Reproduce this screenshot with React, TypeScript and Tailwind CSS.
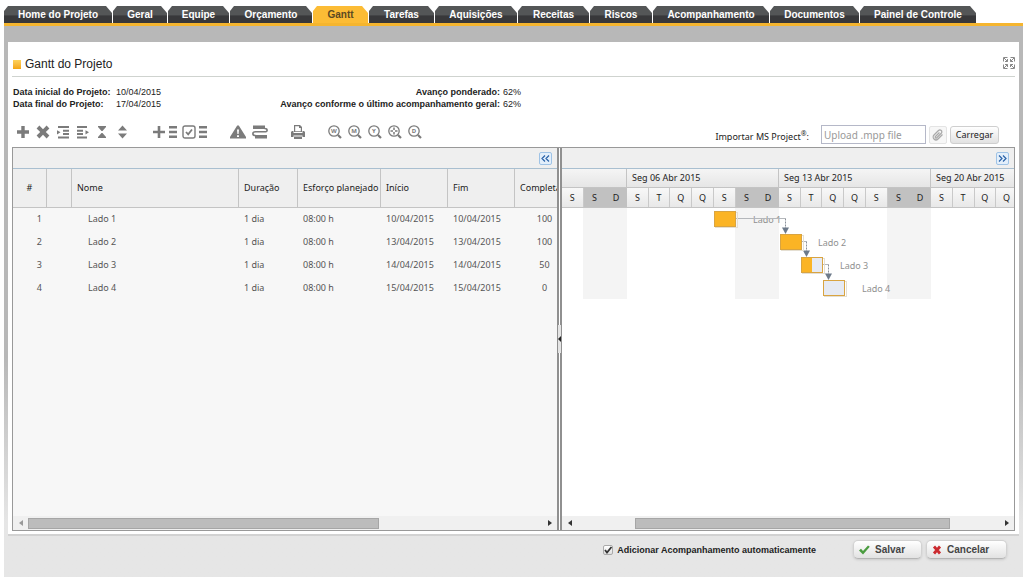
import { useState } from "react";
import type { ReactNode } from "react";

const TABS = [
  { label: "Home do Projeto", width: "w-[108px]" },
  { label: "Geral", width: "w-[54px]" },
  { label: "Equipe", width: "w-[61px]" },
  { label: "Orçamento", width: "w-[82px]" },
  { label: "Gantt", width: "w-[55px]" },
  { label: "Tarefas", width: "w-[65px]" },
  { label: "Aquisições", width: "w-[82px]" },
  { label: "Receitas", width: "w-[71px]" },
  { label: "Riscos", width: "w-[62px]" },
  { label: "Acompanhamento", width: "w-[116px]" },
  { label: "Documentos", width: "w-[89px]" },
  { label: "Painel de Controle", width: "w-[116px]" },
];

const TASKS = [
  { id: 1, name: "Lado 1", start: "10/04/2015", end: "10/04/2015", done: 100, x: 152, labelX: 191 },
  { id: 2, name: "Lado 2", start: "13/04/2015", end: "13/04/2015", done: 100, x: 218, labelX: 256 },
  { id: 3, name: "Lado 3", start: "14/04/2015", end: "14/04/2015", done: 50, x: 239, labelX: 278 },
  { id: 4, name: "Lado 4", start: "15/04/2015", end: "15/04/2015", done: 0, x: 261, labelX: 300 },
];

// The visible range starts on a Friday and ends on a Thursday
const WEEKS = [
  { label: "", days: ["S", "S", "D"], weekend: 1, width: "w-[65px]", cols: "grid-cols-3" },
  { label: "Seg 06 Abr 2015", days: ["S", "T", "Q", "Q", "S", "S", "D"], weekend: 5, width: "w-[152px]", cols: "grid-cols-7" },
  { label: "Seg 13 Abr 2015", days: ["S", "T", "Q", "Q", "S", "S", "D"], weekend: 5, width: "w-[152px]", cols: "grid-cols-7" },
  { label: "Seg 20 Abr 2015", days: ["S", "T", "Q", "Q"], weekend: 5, width: "w-[87px]", cols: "grid-cols-4" },
];

const ROW = 23;

function Tabs({ active, onSelect }: { active: string; onSelect: (tab: string) => void }) {
  return (
    <nav className="flex gap-px border-b-[3px] border-[#f5b52f] pt-1.5 text-[10px] leading-[17px] font-bold">
      {TABS.map((tab) => (
        <button
          key={tab.label}
          type="button"
          onClick={() => onSelect(tab.label)}
          className={
            "h-[17px] shrink-0 whitespace-nowrap [clip-path:polygon(0_5px,4px_0,calc(100%-6px)_0,100%_7px,100%_100%,0_100%)] " +
            tab.width +
            (tab.label === active
              ? " bg-[#fcbc35] text-[#5c4a22]"
              : " bg-linear-to-b from-[#545657] from-50% to-[#38383a] to-60% text-white")
          }
        >
          {tab.label}
        </button>
      ))}
    </nav>
  );
}

function Tool({ label, size = "w-5", children }: { label: string; size?: string; children: ReactNode }) {
  return (
    <button type="button" aria-label={label} title={label} className={"flex h-5 items-center justify-center text-[#7b7b7b] " + size}>
      {children}
    </button>
  );
}

function Icon({ d, width = 14 }: { d: string; width?: number }) {
  return (
    <svg width={width} height="14" viewBox={`0 0 ${width} 14`} fill="currentColor" fillRule="evenodd">
      <path d={d} />
    </svg>
  );
}

function ZoomIcon({ letter }: { letter: string }) {
  return (
    <svg width="14" height="14" viewBox="0 0 14 14" fill="none" stroke="currentColor">
      <circle cx="6" cy="6" r="5.2" strokeWidth="1.3" />
      <path d="M10 10l3 3" strokeWidth="2.2" />
      {letter === "+" ? (
        <path d="M6 2.500v2.500M6 7v2.500M2.500 6H5M7 6h2.500" strokeWidth="1.5" />
      ) : (
        <text x="6" y="8.2" fontSize="6" fontWeight="bold" textAnchor="middle" fill="currentColor" stroke="none">
          {letter}
        </text>
      )}
    </svg>
  );
}

function Toolbar() {
  return (
    <div className="flex gap-[17px]">
      <div className="flex">
        <Tool label="Adicionar"><Icon d="M5.300 1h3.400v4.300H13v3.400H8.700V13H5.300V8.700H1V5.300h4.300z" /></Tool>
        <Tool label="Excluir"><Icon d="M3.400.6L7 4.200 10.600.6 13.400 3.400 9.800 7 13.400 10.600 10.600 13.400 7 9.800 3.400 13.400.6 10.600 4.200 7 .6 3.400z" /></Tool>
        <Tool label="Recuar"><Icon d="M2 1h11v2H2zM7 4.700h6v2H7zM7 8h6v2H7zM2 11.500h11v2H2zM1 5.200l3.500 2.100L1 9.400z" /></Tool>
        <Tool label="Avançar"><Icon d="M1 1h10v2H1zM1 4.700h6v2H1zM1 8h6v2H1zM1 11.500h10v2H1zM9.500 5.200L13 7.300 9.500 9.400z" /></Tool>
        <Tool label="Recolher tudo"><Icon width={10} d="M0 1h8v1L4.500 6h-1L0 2zM3.500 8h1L8 12v1H0v-1z" /></Tool>
        <Tool label="Expandir tudo"><Icon width={10} d="M4.500.5L9 5.500H0zM0 8.500h9l-4.500 5z" /></Tool>
      </div>
      <div className="flex">
        <Tool label="Adicionar vários" size="w-[30px]">
          <Icon width={26} d="M5.700 1h2.600v4.700H13v2.600H8.300V13H5.700V8.300H1V5.700h4.700zM17 1h8v2.500h-8zM17 5.700h8v2.500h-8zM17 10.500h8V13h-8z" />
        </Tool>
        <Tool label="Selecionar tarefas" size="w-[30px]">
          <svg width="26" height="14" viewBox="0 0 26 14" fill="none" stroke="currentColor" strokeWidth="1.400">
            <rect x="1" y="1" width="12" height="12" rx="2" />
            <path d="M4 7l2.200 2.300L10 4.500" strokeWidth="1.800" />
            <path d="M17 2.200h8M17 7h8M17 11.800h8" strokeWidth="2.500" />
          </svg>
        </Tool>
      </div>
      <div className="flex">
        <Tool label="Caminho crítico" size="w-[22px]"><Icon width={16} d="M7.200.5h1.600L16 12v1.500H0V12zM7 4.500l.4 4.500h1.200L9 4.500zM7 10.200v1.800h2v-1.800z" /></Tool>
        <Tool label="Linha de base" size="w-[22px]">
          <svg width="16" height="14" viewBox="0 0 16 14" fill="none" stroke="currentColor">
            <path d="M1 2.300h12M3 11.700h12" strokeWidth="3.400" />
            <path d="M12.500 3.500c3.500 0 3.500 3.300 0 3.300h-9c-3.500 0-3.500 3.700 0 3.700" strokeWidth="1.600" />
          </svg>
        </Tool>
      </div>
      <Tool label="Imprimir"><Icon d="M3 0h6l2 2v5H3zM4.200 1.200v5h5.600V3H8V1.200zM1 6h1.500v2h9V6H13l1 1v5h-2.500v-1.500h-9V12H0V7zM3 11.500h8V14H3z" /></Tool>
      <div className="flex">
        <Tool label="Semana"><ZoomIcon letter="W" /></Tool>
        <Tool label="Mês"><ZoomIcon letter="M" /></Tool>
        <Tool label="Ano"><ZoomIcon letter="Y" /></Tool>
        <Tool label="Ajustar"><ZoomIcon letter="+" /></Tool>
        <Tool label="Dia"><ZoomIcon letter="D" /></Tool>
      </div>
    </div>
  );
}

function PaneBar({ label, d }: { label: string; d: string }) {
  return (
    <div className="flex h-[21px] shrink-0 items-center justify-end border-b border-[#a9bfd0] bg-[#efefef] px-[5px]">
      <button type="button" aria-label={label} className="flex h-[13px] w-[13px] items-center justify-center rounded-xs border border-[#9fc3e6] bg-[#e3effb]">
        <svg width="9" height="7" viewBox="0 0 9 7" fill="none" stroke="#2a62a8" strokeWidth="1.200">
          <path d={d} />
        </svg>
      </button>
    </div>
  );
}

function ScrollBar({ thumb, muted = false }: { thumb: string; muted?: boolean }) {
  return (
    <div className="mt-auto flex h-3.5 shrink-0 items-center bg-[#f0f0f0]">
      <button type="button" aria-label="Rolar para a esquerda" className={"flex w-[15px] justify-center " + (muted ? "text-[#999]" : "text-[#333]")}>
        <svg width="4" height="6" viewBox="0 0 4 6" fill="currentColor"><path d="M4 0v6L0 3z" /></svg>
      </button>
      <div className="flex-1">
        <div className={"h-[11px] border border-[#a6a6a6] bg-[#bcbcbc] " + thumb} />
      </div>
      <button type="button" aria-label="Rolar para a direita" className="flex w-[15px] justify-center text-[#333]">
        <svg width="4" height="6" viewBox="0 0 4 6" fill="currentColor"><path d="M0 0v6l4-3z" /></svg>
      </button>
    </div>
  );
}

function TaskTable() {
  const th = "border-r border-b border-[#c4c4c4] pl-[5px] text-left font-normal";
  return (
    <div className="overflow-hidden">
      <table className="w-[561px] table-fixed border-separate border-spacing-0 text-[#555]">
        <colgroup>
          <col className="w-[34px]" />
          <col className="w-[25px]" />
          <col className="w-[167px]" />
          <col className="w-[59px]" />
          <col className="w-[83px]" />
          <col className="w-[67px]" />
          <col className="w-[67px]" />
          <col className="w-[59px]" />
        </colgroup>
        <thead>
          <tr className="h-[39px] bg-[#efefef] text-[#222]">
            <th className="border-r border-b border-[#c4c4c4] text-center font-normal">#</th>
            <th className={th} aria-label="Indicador" />
            <th className={th}>Nome</th>
            <th className={th}>Duração</th>
            <th className={th + " whitespace-nowrap"}>Esforço planejado</th>
            <th className={th}>Início</th>
            <th className={th}>Fim</th>
            <th className={th}>Completa</th>
          </tr>
        </thead>
        <tbody>
          {TASKS.map((task) => (
            <tr key={task.id} className="h-[23px] *:pb-0.5">
              <td className="pr-[5px] text-right">{task.id}</td>
              <td />
              <td className="pl-4">{task.name}</td>
              <td className="pl-[5px]">1 dia</td>
              <td className="pl-[5px]">08:00 h</td>
              <td className="pl-[5px]">{task.start}</td>
              <td className="pl-[5px]">{task.end}</td>
              <td className="text-center">{task.done}</td>
            </tr>
          ))}
        </tbody>
      </table>
    </div>
  );
}

function Timeline() {
  return (
    <div className="overflow-hidden">
      <div className="flex text-[#222]">
        {WEEKS.map((week, i) => (
          <div key={i} className={"shrink-0 " + week.width}>
            <div className="h-[19px] border-r border-b border-[#c4c4c4] bg-linear-to-b from-[#f5f5f5] to-[#e6e6e6] pl-[5px] leading-[18px] whitespace-nowrap">
              {week.label}
            </div>
            <div className={"grid h-5 border-b border-[#c4c4c4] text-center leading-[19px] " + week.cols}>
              {week.days.map((day, j) => (
                <span
                  key={j}
                  className={
                    j >= week.weekend
                      ? "bg-[#c1c1c1]"
                      : "border-r border-[#c9c9c9] bg-linear-to-b from-[#f8f8f8] to-[#e8e8e8]"
                  }
                >
                  {day}
                </span>
              ))}
            </div>
          </div>
        ))}
      </div>
      <svg width="452" height="92" className="block">
        {[21, 173, 325].map((x) => (
          <rect key={x} x={x} width="44" height="91" fill="#f4f4f4" />
        ))}
        {TASKS.map((task, i) => (
          <text key={task.id} x={task.labelX} y={i * ROW + 15} fill="#8f8f8f">
            {task.name}
          </text>
        ))}
        {TASKS.slice(1).map((task, i) => {
          const from = TASKS[i].x + 22;
          const y = i * ROW + 10.5;
          const x = task.x + 5.5;
          return (
            <g key={task.id}>
              <path d={`M${from} ${y}H${x}`} fill="none" stroke="#b4b7bb" />
              <path d={`M${x} ${y}V${y + 10}`} fill="none" stroke="#8b919a" strokeDasharray="2 1" />
              <path d={`M${x - 3.5} ${y + 9}h7l-3.500 6.500z`} fill="#6d7a8a" />
            </g>
          );
        })}
        {TASKS.map((task, i) => (
          <g key={task.id}>
            <rect x={task.x + 1.5} y={i * ROW + 4.5} width="22" height="15" fill="none" stroke="#e5dfd2" />
            <rect x={task.x + 0.5} y={i * ROW + 3.5} width="21" height="15" fill="#e6eaf3" />
            <rect x={task.x + 0.5} y={i * ROW + 3.5} width={(21 * task.done) / 100} height="15" fill="#fbb425" />
            <rect x={task.x + 0.5} y={i * ROW + 3.5} width="21" height="15" fill="none" stroke="#d9a441" />
          </g>
        ))}
      </svg>
    </div>
  );
}

function Splitter() {
  return (
    <div className="flex w-[5px] shrink-0 items-center border-x-2 border-[#909090] bg-white">
      <button type="button" aria-label="Recolher painel" className="-mx-px flex h-7 w-[3px] shrink-0 items-center justify-center bg-[#e4e4e4]">
        <svg width="3" height="6" viewBox="0 0 3 6" className="shrink-0"><path d="M3 0v6L0 3z" fill="#222" /></svg>
      </button>
    </div>
  );
}

const FOOTER_BUTTON =
  "flex h-[19px] items-center rounded-[5px] border border-[#d2d2d2] border-b-[#b5b5b5] bg-linear-to-b from-white to-[#e2e2e2] pl-[5px] text-[10px] font-bold text-[#444] shadow-sm";

export default function App() {
  const [tab, setTab] = useState("Gantt");
  const [auto, setAuto] = useState(true);
  const [file, setFile] = useState("");

  return (
    <div className="flex min-h-screen flex-col bg-white pr-px pl-1 font-['Liberation_Sans',Arial,sans-serif] text-[9px] leading-3 text-[#222]">
      <Tabs active={tab} onSelect={setTab} />
      <div className="flex flex-1 flex-col bg-linear-to-b from-[#b8b8b8] from-60% to-[#e6e6e6] to-90% px-1 pt-4">
        <main className="flex flex-1 flex-col border-b-2 border-[#d2d2d2] bg-white px-1 pb-[3px]">
          <header className="flex h-[35px] items-end justify-between border-b border-[#cfd3cf] pb-1 pl-px">
            <h1 className="flex items-center gap-1 text-[12px] leading-4 text-[#222]">
              <span className="h-[9px] w-2 bg-linear-to-b from-[#fdd35c] to-[#f3a50c]" />
              Gantt do Projeto
            </h1>
            <button type="button" aria-label="Tela cheia" className="mb-[3px]">
              <svg width="12" height="12" viewBox="0 0 12 12" fill="none" stroke="#888">
                <path d="M.5 4.500v-4h4M1 1l3.500 3.500M4.500 2v2.500H2M11.500 4.500v-4h-4M11 1L7.500 4.500M7.500 2v2.500H10M.5 7.500v4h4M1 11l3.500-3.500M4.500 10V7.500H2M11.500 7.500v4h-4M11 11L7.500 7.500M7.500 10V7.500H10" />
              </svg>
            </button>
          </header>

          <div className="mt-[9px] flex pl-px">
            <dl className="grid grid-cols-[103px_auto]">
              <dt className="font-bold whitespace-nowrap">Data inicial do Projeto:</dt>
              <dd>10/04/2015</dd>
              <dt className="font-bold whitespace-nowrap">Data final do Projeto:</dt>
              <dd>17/04/2015</dd>
            </dl>
            <dl className="grid w-[360px] grid-cols-[1fr_18px] gap-x-[3px]">
              <dt className="text-right font-bold">Avanço ponderado:</dt>
              <dd>62%</dd>
              <dt className="text-right font-bold">Avanço conforme o último acompanhamento geral:</dt>
              <dd>62%</dd>
            </dl>
          </div>

          <div className="mt-3 flex h-[25px] items-start justify-between pr-4 pl-px font-['Noto_Sans',sans-serif]">
            <Toolbar />
            <form className="mt-[3px] flex items-center" onSubmit={(e) => e.preventDefault()}>
              <label htmlFor="mpp" className="mr-3 pt-1 whitespace-nowrap">
                Importar MS Project<sup className="text-[7px] leading-none">®</sup>:
              </label>
              <input
                id="mpp"
                type="text"
                placeholder="Upload .mpp file"
                value={file}
                onChange={(e) => setFile(e.target.value)}
                className="h-[19px] w-[105px] border border-[#b5b8c8] bg-white px-0.5 text-[10px] placeholder:text-[#999] focus:outline-none"
              />
              <button type="button" aria-label="Anexar" className="ml-[3px] flex h-[18px] w-[18px] items-center justify-center rounded-xs border border-[#e4e4e4] bg-[#f7f7f7]">
                <svg width="12" height="12" viewBox="0 0 24 24" fill="none" stroke="#aaa" strokeWidth="2.500">
                  <path d="M21 11l-9 9a5.500 5.500 0 0 1-8-8l9-9a3.700 3.700 0 0 1 5.500 5.500l-9 9a1.800 1.800 0 0 1-2.600-2.600l8-8" />
                </svg>
              </button>
              <button type="submit" className="ml-[3px] h-[18px] w-[49px] rounded-[3px] border border-[#cfcfcf] bg-linear-to-b from-white to-[#e2e2e2]">
                Carregar
              </button>
            </form>
          </div>

          <div className="flex min-h-[384px] flex-1 border border-[#999] font-['Noto_Sans',sans-serif]">
            <section className="flex w-[544px] shrink-0 flex-col overflow-hidden bg-[#f7f7f7]">
              <PaneBar label="Recolher tabela" d="M4 .5l-3 3 3 3M8 .5l-3 3 3 3" />
              <TaskTable />
              <ScrollBar thumb="w-[351px]" muted />
            </section>
            <Splitter />
            <section className="flex min-w-0 flex-1 flex-col overflow-hidden bg-white">
              <PaneBar label="Expandir gráfico" d="M1 .5l3 3-3 3M5 .5l3 3-3 3" />
              <Timeline />
              <ScrollBar thumb="ml-[58px] w-[315px]" />
            </section>
          </div>
        </main>

        <footer className="flex h-[42px] items-start justify-end pt-1 pr-3">
          <label className="mr-[37px] flex h-[19px] items-center gap-1 font-bold whitespace-nowrap text-[#222]">
            <span className="grid">
              <input
                type="checkbox"
                checked={auto}
                onChange={(e) => setAuto(e.target.checked)}
                className="peer col-start-1 row-start-1 h-2.5 w-2.5 appearance-none rounded-xs border border-[#aaa] bg-linear-to-b from-white to-[#e0e0e0]"
              />
              <svg width="10" height="10" viewBox="0 0 10 10" className="pointer-events-none invisible col-start-1 row-start-1 peer-checked:visible">
                <path d="M2 5l2 2.500L8.500 2" fill="none" stroke="#333" strokeWidth="1.800" />
              </svg>
            </span>
            Adicionar Acompanhamento automaticamente
          </label>
          <button type="button" className={FOOTER_BUTTON + " mr-1 w-[69px] gap-[5px]"}>
            <svg width="11" height="10" viewBox="0 0 11 10"><path d="M0 5.500l2-1.800L4 6 9 .5l1.800 1.300L4 9.500z" fill="#4a9c3f" /></svg>
            Salvar
          </button>
          <button type="button" className={FOOTER_BUTTON + " w-[81px] gap-[5px]"}>
            <svg width="10" height="10" viewBox="0 0 10 10"><path d="M2 1.500l6 7M8 1.500l-6 7" stroke="#cb2a2f" strokeWidth="2.800" /></svg>
            Cancelar
          </button>
        </footer>
      </div>
    </div>
  );
}
